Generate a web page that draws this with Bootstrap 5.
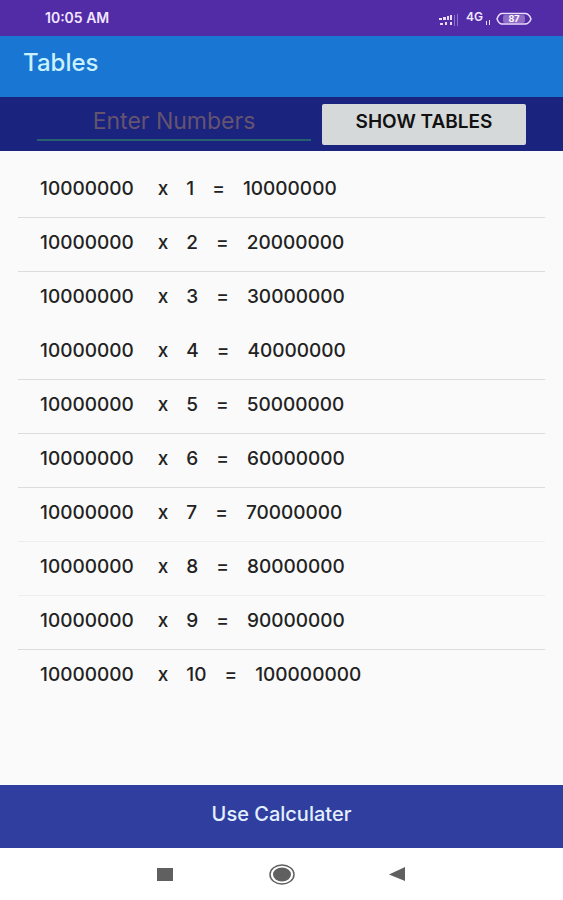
<!DOCTYPE html>
<html lang="en">
<head>
<meta charset="utf-8">
<meta name="viewport" content="width=device-width, initial-scale=1">
<title>Tables</title>
<link rel="stylesheet" href="https://cdn.jsdelivr.net/npm/bootstrap@5.3.0/dist/css/bootstrap.min.css">
<style>
  body { font-family: Inter, "DejaVu Sans", sans-serif; background: #fafafa; color: #222; }
  .status-bar { background: #522ba7; color: #f1e6ff; height: 36px; padding: 0 30px 0 45px; font-size: 14px; line-height: 16px; }
  .app-bar { background: #1976d2; height: 61px; padding: 0 23px 8px; }
  .app-title { font-size: 24px; line-height: 28px; color: #c9f1ff; }
  .entry-bar { background: #1a237e; height: 54px; padding: 7px 37px 6px; gap: 11px; }
  .entry-field { border: 0; border-bottom: 2px solid #27606f; border-radius: 0; background: transparent; color: #fff; font-size: 23px; line-height: 32px; height: 37px; padding: 0 0 2px; text-align: center; }
  .entry-field:focus { background: transparent; color: #fff; box-shadow: none; border-color: #4f9; }
  .entry-field::placeholder { color: #66536f; opacity: 1; }
  .entry-button { flex: 0 0 204px; background: #d6d9d9; color: #111; border: 0; border-radius: 2px; font-size: 19px; line-height: 24px; font-weight: 600; padding: 0 0 6px; }
  .times-list { padding: 13px 18px 0; }
  .times-row { height: 54px; padding: 0 22px 4px; border-bottom: 1px solid #dcdcdc; font-size: 19px; line-height: 24px; font-weight: 500; gap: 18px; }
  .times-row:last-child, .times-row.plain { border-bottom-color: transparent; }
  .times-row.faint { border-bottom-color: #eee; }
  .base-number { margin-right: 6px; }
  .calc-button { background: #303f9f; color: #e3f0ff; height: 63px; border: 0; border-radius: 0; font-size: 20px; line-height: 24px; font-weight: 500; padding: 0 0 6px; }
  .calc-button:hover { background: #283593; color: #fff; }
  .system-nav { background: #fff; height: 52px; padding: 0 152px; }
  .system-nav svg { display: block; }
</style>
<script src="https://cdn.jsdelivr.net/npm/bootstrap@5.3.0/dist/js/bootstrap.bundle.min.js"></script>
</head>
<body>
<div class="d-flex flex-column min-vh-100">
  <div class="status-bar d-flex justify-content-between align-items-center">
    <span class="fw-semibold">10:05 AM</span>
    <svg width="96" height="20" viewBox="0 0 96 20" role="img" aria-label="Signal 4G, battery 87">
      <g fill="#eadcff">
        <path d="M2 10h3v2H2zM6 9h3v3H6zM10 8h2v4h-2zM13 7h2v5h-2zM3 15h3v2H3zM8 14h2v3H8zM13 14h2v3h-2z"/>
        <path d="M17 7h1v11h-1zM20 6h1v12h-1z" opacity=".4"/>
        <path d="M49 13h1v4h-1zM52 12h1v5h-1z"/>
      </g>
      <text x="29" y="13" font-size="12" font-weight="600" fill="#f1e6ff">4G</text>
      <path d="M65 5.500h23q4 0 6 5.500q-2 5-6 5H65q-3 0-5-5q2-5.500 5-5.500z" fill="none" stroke="#eadcff" stroke-width="1.500"/>
      <rect x="66" y="7" width="22" height="8" rx="2" fill="#8f6bc6"/>
      <text x="77" y="14" text-anchor="middle" font-size="9" font-weight="700" fill="#fff">87</text>
    </svg>
  </div>
  <header class="app-bar d-flex align-items-center">
    <h1 class="app-title m-0">Tables</h1>
  </header>
  <form class="entry-bar d-flex">
    <label class="visually-hidden" for="number">Enter Numbers</label>
    <input class="form-control entry-field flex-fill" id="number" type="text" inputmode="numeric" placeholder="Enter Numbers">
    <button class="btn entry-button" type="button">SHOW TABLES</button>
  </form>
  <main class="flex-grow-1">
    <ul class="times-list list-unstyled m-0">
      <li class="times-row d-flex align-items-center"><span class="base-number">10000000</span><span>x</span><span>1</span><span>=</span><span>10000000</span></li>
      <li class="times-row d-flex align-items-center"><span class="base-number">10000000</span><span>x</span><span>2</span><span>=</span><span>20000000</span></li>
      <li class="times-row plain d-flex align-items-center"><span class="base-number">10000000</span><span>x</span><span>3</span><span>=</span><span>30000000</span></li>
      <li class="times-row d-flex align-items-center"><span class="base-number">10000000</span><span>x</span><span>4</span><span>=</span><span>40000000</span></li>
      <li class="times-row d-flex align-items-center"><span class="base-number">10000000</span><span>x</span><span>5</span><span>=</span><span>50000000</span></li>
      <li class="times-row d-flex align-items-center"><span class="base-number">10000000</span><span>x</span><span>6</span><span>=</span><span>60000000</span></li>
      <li class="times-row faint d-flex align-items-center"><span class="base-number">10000000</span><span>x</span><span>7</span><span>=</span><span>70000000</span></li>
      <li class="times-row faint d-flex align-items-center"><span class="base-number">10000000</span><span>x</span><span>8</span><span>=</span><span>80000000</span></li>
      <li class="times-row d-flex align-items-center"><span class="base-number">10000000</span><span>x</span><span>9</span><span>=</span><span>90000000</span></li>
      <li class="times-row d-flex align-items-center"><span class="base-number">10000000</span><span>x</span><span>10</span><span>=</span><span>100000000</span></li>
    </ul>
  </main>
  <button class="btn calc-button w-100" type="button">Use Calculater</button>
  <nav class="system-nav d-flex justify-content-between align-items-center" aria-label="System">
    <button class="btn p-0 border-0" type="button" aria-label="Recent apps"><svg width="26" height="24" viewBox="0 0 26 24"><path d="M5 6h16v13H5z" fill="#606060"/></svg></button>
    <button class="btn p-0 border-0" type="button" aria-label="Home"><svg width="28" height="24" viewBox="0 0 28 24"><ellipse cx="14" cy="12.500" rx="12" ry="9.500" fill="none" stroke="#606060" stroke-width="1.500"/><ellipse cx="14" cy="12.500" rx="9" ry="7" fill="#606060"/></svg></button>
    <button class="btn p-0 border-0" type="button" aria-label="Back"><svg width="26" height="24" viewBox="0 0 26 24"><path d="M4 12.500 20 5v14z" fill="#606060"/></svg></button>
  </nav>
</div>
</body>
</html>
